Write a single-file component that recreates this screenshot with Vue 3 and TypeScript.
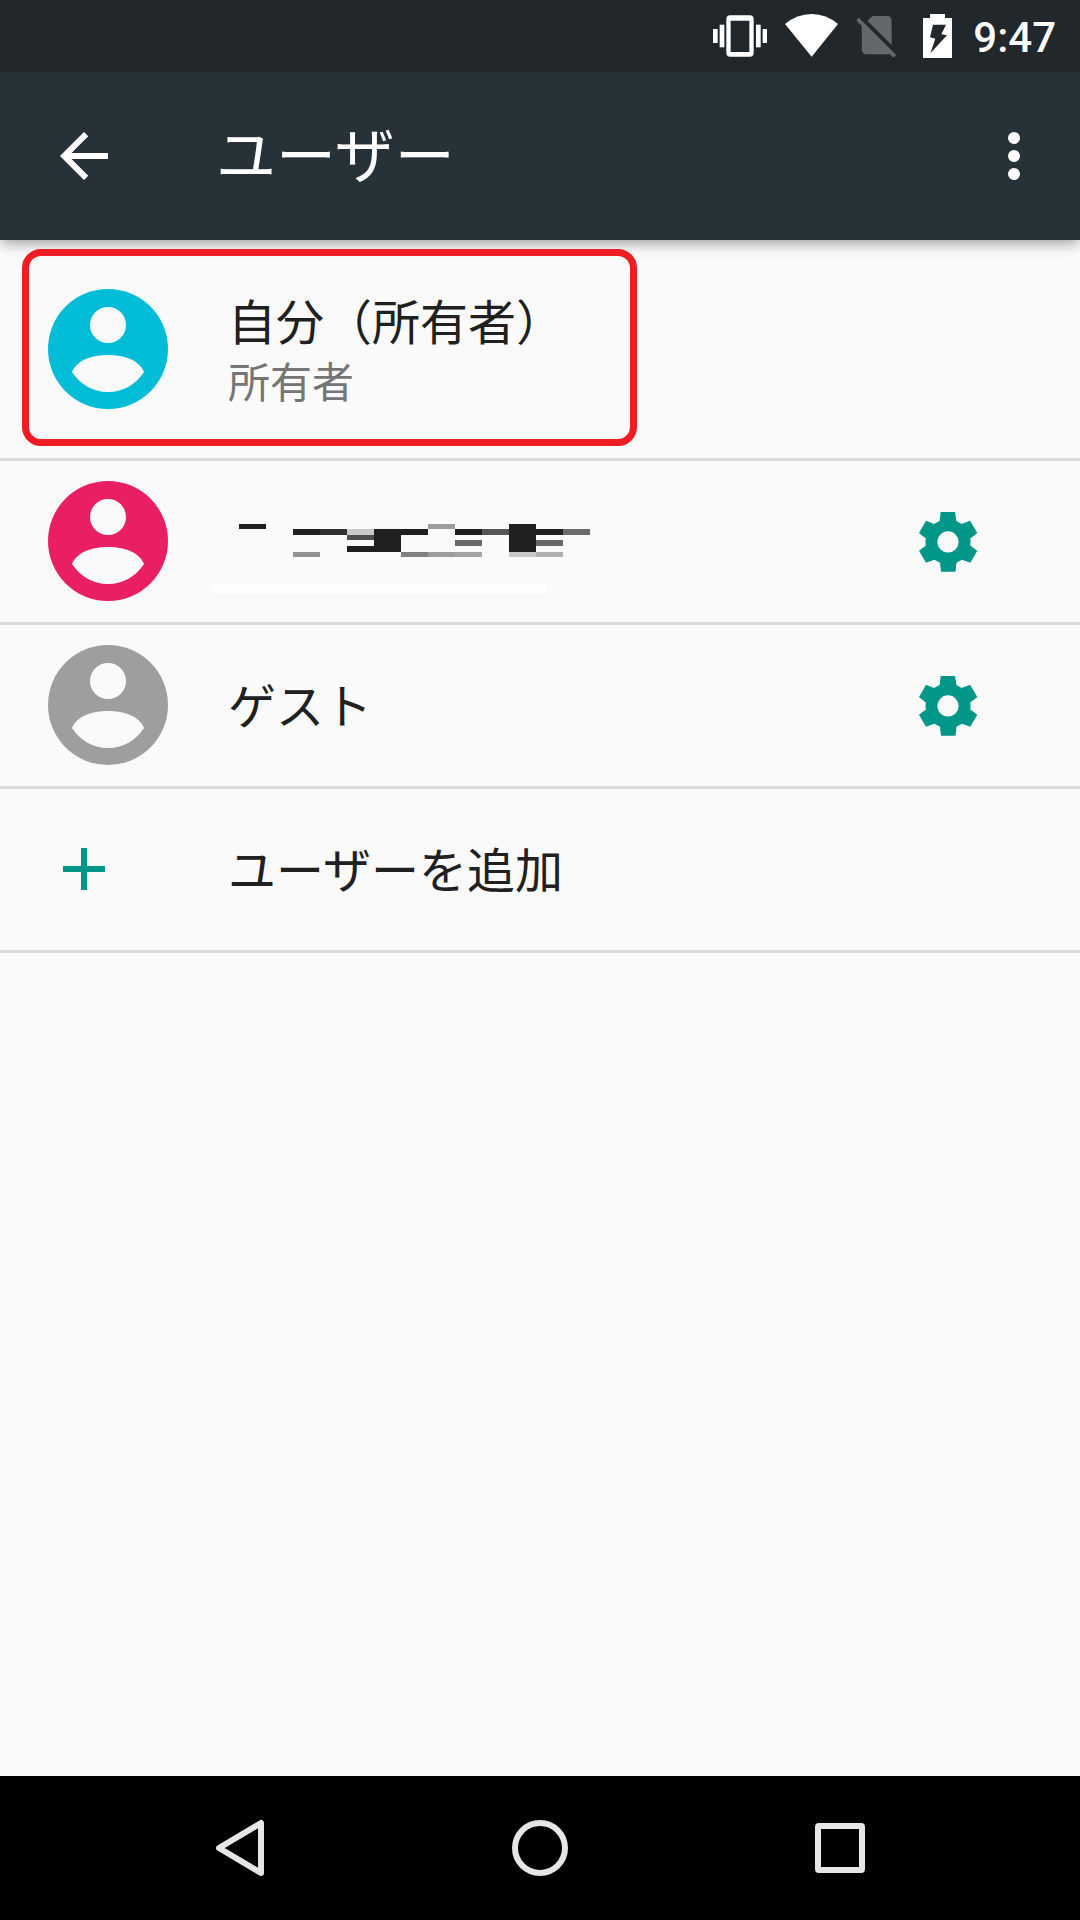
<script setup lang="ts">
interface UserRow {
  id: string
  name: string
  role?: string
  color: string
  configurable: boolean
  highlighted?: boolean
}

interface MaskCell {
  x: number
  y: number
  w: number
  h: number
  fill: string
}

const users: UserRow[] = [
  { id: 'owner', name: '自分（所有者）', role: '所有者', color: '#00bcd6', configurable: false, highlighted: true },
  { id: 'second', name: '', color: '#ea1e63', configurable: true },
  { id: 'guest', name: 'ゲスト', color: '#9e9e9e', configurable: true },
]

// Mosaic that hides the second user's name
const mask: MaskCell[] = [
  { x: 27, y: 36, w: 27, h: 5, fill: '#202020' },
  { x: 216, y: 36, w: 27, h: 5, fill: '#9d9d9d' },
  { x: 81, y: 41, w: 27, h: 6, fill: '#202020' },
  { x: 108, y: 41, w: 27, h: 6, fill: '#303030' },
  { x: 135, y: 41, w: 27, h: 6, fill: '#cacaca' },
  { x: 162, y: 41, w: 54, h: 6, fill: '#202020' },
  { x: 243, y: 41, w: 27, h: 6, fill: '#202020' },
  { x: 270, y: 41, w: 27, h: 6, fill: '#565656' },
  { x: 324, y: 41, w: 27, h: 6, fill: '#202020' },
  { x: 351, y: 41, w: 27, h: 6, fill: '#6b6b6b' },
  { x: 135, y: 47, w: 27, h: 5, fill: '#4d4d4d' },
  { x: 162, y: 47, w: 27, h: 17, fill: '#202020' },
  { x: 243, y: 52, w: 27, h: 6, fill: '#696969' },
  { x: 324, y: 52, w: 27, h: 6, fill: '#686868' },
  { x: 135, y: 58, w: 27, h: 6, fill: '#202020' },
  { x: 297, y: 36, w: 27, h: 28, fill: '#202020' },
  { x: 81, y: 64, w: 27, h: 5, fill: '#929292' },
  { x: 189, y: 64, w: 27, h: 5, fill: '#808080' },
  { x: 216, y: 64, w: 27, h: 5, fill: '#9d9d9d' },
  { x: 243, y: 64, w: 27, h: 5, fill: '#a5a5a5' },
  { x: 297, y: 64, w: 27, h: 5, fill: '#c8c8c8' },
  { x: 324, y: 64, w: 27, h: 5, fill: '#b0b0b0' },
  { x: 0, y: 97, w: 334, h: 9, fill: '#ffffff' },
]
</script>

<template>
  <div class="screen">
    <div class="status-bar">
      <svg width="54" height="72" viewBox="0 0 162 216" fill="#fff" aria-hidden="true">
        <rect x="0" y="87" width="14" height="42" />
        <rect x="20" y="74" width="14" height="68" />
        <rect x="129" y="74" width="14" height="68" />
        <rect x="149" y="87" width="14" height="42" />
        <path fill-rule="evenodd" d="M52 46h58q12 0 12 12v100q0 12-12 12H52q-12 0-12-12V58q0-12 12-12zM53 62v94h56V62z" />
      </svg>
      <svg width="53" height="72" viewBox="0 0 159 216" fill="#fff" aria-hidden="true">
        <path d="M80 170 0 72Q36 42 80 42T159 72z" />
      </svg>
      <svg width="41" height="72" viewBox="2.3 -4.5 19.2 33.8" fill="#64686b" aria-hidden="true">
        <path d="M18.99 5c0-1.1-.89-2-1.99-2h-7L7.66 5.34 19 16.68zM3.65 3.88 2.38 5.15 5 7.77V19c0 1.1.9 2 2 2h10.01c.35 0 .67-.1.96-.26l1.88 1.88 1.27-1.27z" />
      </svg>
      <svg width="40" height="72" viewBox="0 0 120 216" fill="#fff" aria-hidden="true">
        <path fill-rule="evenodd" d="M45 42h45v12h21v120H24V54h21zM54 74 45 112l16 4-15 44 50-54-17-3 14-29z" />
      </svg>
      <time class="clock">9:47</time>
    </div>

    <header class="app-bar">
      <button class="icon-button" type="button" aria-label="戻る">
        <svg width="72" height="72" viewBox="0 0 24 24" fill="#fff">
          <path d="M20 11H7.83l5.59-5.59L12 4l-8 8 8 8 1.41-1.41L7.83 13H20z" />
        </svg>
      </button>
      <h1 class="title">ユーザー</h1>
      <button class="icon-button" type="button" aria-label="その他のオプション">
        <svg width="72" height="72" viewBox="0 0 24 24" fill="#fff">
          <circle cx="12" cy="6" r="2" />
          <circle cx="12" cy="12" r="2" />
          <circle cx="12" cy="18" r="2" />
        </svg>
      </button>
    </header>

    <main class="content">
      <ul class="user-list">
        <li v-for="user in users" :key="user.id" class="row" :class="{ tall: user.role }">
          <button class="row-main" type="button">
            <span class="lead">
              <svg width="120" height="120" viewBox="0 0 120 120" aria-hidden="true">
                <circle cx="60" cy="60" r="60" :fill="user.color" />
                <circle cx="60" cy="36" r="18" fill="#fafafa" />
                <path d="M24 83C29 71 44 66 60 66s31 5 36 17c-8 12-20 20-36 20s-28-8-36-20z" fill="#fafafa" />
              </svg>
            </span>
            <span v-if="user.name" class="labels">
              <span class="name">{{ user.name }}</span>
              <span v-if="user.role" class="role">{{ user.role }}</span>
            </span>
            <svg v-else class="mask" width="378" height="108" viewBox="0 0 378 108" shape-rendering="crispEdges" aria-hidden="true">
              <rect v-for="(cell, i) in mask" :key="i" :x="cell.x" :y="cell.y" :width="cell.w" :height="cell.h" :fill="cell.fill" />
            </svg>
          </button>
          <button v-if="user.configurable" class="icon-button" type="button" aria-label="設定">
            <svg width="72" height="72" viewBox="0 0 72 72" fill="#009688">
              <path
                fill-rule="evenodd"
                d="M28.7 6H43l1.5 9 5.2 3 8.4-3.2L65.3 27l-7 5.6q.6 3.4 0 6.8l7 5.4-7 12-8.4-3.1-5.4 3-1 9H29l-1-9-5.6-3-8.4 3.1-7-12 6.8-5.4q-.6-3.4 0-6.8L7 27l7-12.2L22 18l5.6-3zM36 25.3a10.6 10.6 0 1 0 0 21.2 10.6 10.6 0 0 0 0-21.2z"
              />
            </svg>
          </button>
          <span v-if="user.highlighted" class="highlight"></span>
        </li>
        <li class="row">
          <button class="row-main" type="button">
            <span class="lead">
              <svg width="72" height="72" viewBox="0 0 72 72" fill="#009688" aria-hidden="true">
                <path d="M33 15h6v18h18v6H39v18h-6V39H15v-6h18z" />
              </svg>
            </span>
            <span class="labels">
              <span class="name">ユーザーを追加</span>
            </span>
          </button>
        </li>
      </ul>
    </main>

    <nav class="nav-bar">
      <button class="nav-button" type="button" aria-label="戻る">
        <svg width="72" height="72" viewBox="0 0 72 72">
          <path d="M57 11v50L15 36z" stroke-linejoin="round" />
        </svg>
      </button>
      <button class="nav-button" type="button" aria-label="ホーム">
        <svg width="72" height="72" viewBox="0 0 72 72">
          <circle cx="36" cy="36" r="25" />
        </svg>
      </button>
      <button class="nav-button" type="button" aria-label="最近使ったアプリ">
        <svg width="72" height="72" viewBox="0 0 72 72">
          <rect x="14" y="14" width="44" height="44" rx="1" />
        </svg>
      </button>
    </nav>
  </div>
</template>

<style>
body {
  margin: 0;
  background: #fafafa;
}
</style>

<style scoped>
.screen {
  display: flex;
  flex-direction: column;
  min-height: 100vh;
  background: #fafafa;
  color: #202020;
  font-family: Roboto, 'Noto Sans CJK JP', sans-serif;
}

button {
  margin: 0;
  padding: 0;
  border: 0;
  background: none;
  color: inherit;
  font: inherit;
  text-align: left;
}

svg {
  display: block;
  flex: none;
}

.status-bar {
  display: flex;
  align-items: center;
  justify-content: flex-end;
  gap: 18px;
  height: 72px;
  padding-right: 24px;
  background: #22272b;
}

.clock {
  padding-top: 4px;
  color: #fff;
  font-size: 42px;
  font-weight: 500;
  line-height: 64px;
}

.app-bar {
  position: relative;
  z-index: 1;
  display: flex;
  align-items: center;
  height: 168px;
  padding: 0 30px 0 48px;
  background: #263238;
  box-shadow: 0 6px 12px -2px rgba(0, 0, 0, 0.35);
}

.title {
  flex: 1;
  margin: 0;
  padding: 4px 0 0 96px;
  color: #fff;
  font-size: 60px;
  font-weight: 400;
  line-height: 72px;
}

.content {
  flex: 1;
}

.user-list {
  margin: 0;
  padding: 0;
  list-style: none;
}

.row {
  position: relative;
  display: flex;
  align-items: center;
  min-height: 161px;
  padding: 0 96px 0 48px;
  border-bottom: 3px solid #dbdbdb;
}

.row.tall {
  min-height: 218px;
}

.row-main {
  display: flex;
  flex: 1;
  align-items: center;
  gap: 60px;
}

.lead {
  width: 120px;
  padding-bottom: 1px;
}

.tall .lead {
  padding-bottom: 0;
}

.labels {
  display: flex;
  flex-direction: column;
  padding-top: 5px;
}

.name {
  font-size: 48px;
  line-height: 64px;
}

.role {
  color: #757575;
  font-size: 42px;
  line-height: 56px;
}

.mask {
  margin-left: -16px;
}

.highlight {
  position: absolute;
  z-index: 2;
  top: 9px;
  left: 22px;
  box-sizing: border-box;
  width: 615px;
  height: 197px;
  border: 7px solid #ee1c23;
  border-radius: 19px;
  pointer-events: none;
}

.nav-bar {
  display: flex;
  justify-content: center;
  height: 144px;
  background: #000;
}

.nav-button {
  display: flex;
  align-items: center;
  justify-content: center;
  width: 300px;
}

.nav-button svg {
  fill: none;
  stroke: #e6e6e6;
  stroke-width: 6;
}
</style>
